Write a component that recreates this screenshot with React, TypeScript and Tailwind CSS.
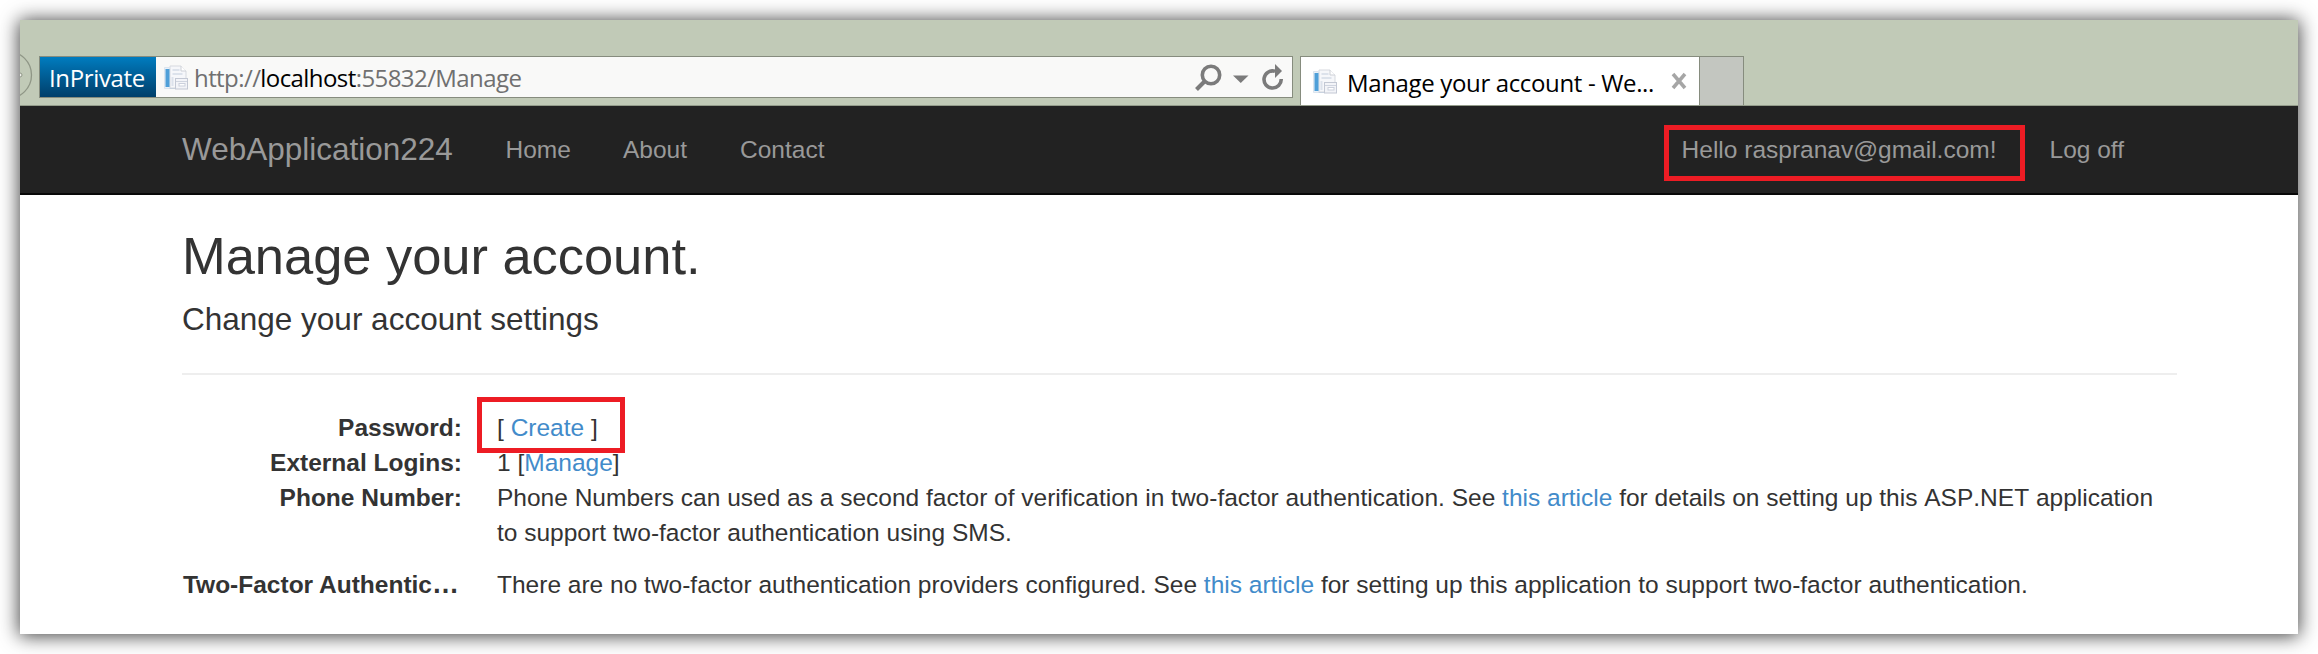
import React from "react";

const PageIcon = ({ className }: { className?: string }) => (
  <svg width="25" height="26" viewBox="0 0 25 26" className={className}>
    <path d="M6 1h11l5 5v17H6z" fill="#f6f7fa" stroke="#d6d9df" />
    <path d="M17 1v5h5" fill="#fff" stroke="#cdd0d6" />
    <path d="M.5 2.500h5v21H.5z" fill="#eaf1f8" stroke="#dbe4ee" />
    <rect x="1.500" y="4" width="4" height="18" fill="#4f9fd8" />
    <path d="M5.500 23.500h6" stroke="#c9d2df" />
    <path d="M8.500 5h7M8.500 9h10M8.500 12v9" stroke="#dce2eb" strokeWidth="2" />
    <rect x="11.500" y="13.500" width="12" height="10.500" fill="#f3f4f8" stroke="#c3c8d4" />
    <path d="M12 16.500h11" stroke="#d0d5e0" />
    <rect x="15" y="18.500" width="6" height="2.500" fill="#fff" stroke="#cbd0dc" />
  </svg>
);

const Row = ({ label, tall, children }: { label: React.ReactNode; tall?: boolean; children: React.ReactNode }) => (
  <div className={tall ? "mt-[17px] flex" : "flex"}>
    <dt className="w-[280px] shrink-0 text-right font-bold whitespace-nowrap">{label}</dt>
    <dd className="relative ml-[35px] min-w-0 flex-1 pr-4">{children}</dd>
  </div>
);

const Link = ({ children }: { children: React.ReactNode }) => (
  <a className="text-[#428bca]">{children}</a>
);

export default function App() {
  return (
    <div className="h-[654px] w-[2318px] overflow-hidden bg-white p-5">
      <div className="h-[614px] w-[2278px] bg-white shadow-[0_1px_18px_1px_rgba(0,0,0,0.75)]">
        <div className="flex h-[86px] overflow-hidden border-b border-[#949c8b] bg-[#c1cab7] pt-9 font-['Open_Sans',sans-serif]">
          <svg width="19" height="49" viewBox="0 0 19 49" className="-mt-1.5 shrink-0">
            <circle cx="-12" cy="25" r="23.500" fill="none" stroke="#8f9686" strokeWidth="1.300" />
            <circle cx="0" cy="25" r="2" fill="#eef0ea" stroke="#8f9686" />
          </svg>
          <div className="flex h-[42px] w-[1254px] shrink-0 border border-[#868c7e] bg-[#f9f9f8]">
            <div className="w-[116px] bg-linear-to-b from-[#007cbf] to-[#003f6b] pl-[9px] text-[24px] leading-[42px] font-medium tracking-[-0.35px] whitespace-nowrap text-white">
              InPrivate
            </div>
            <PageIcon className="mt-2 ml-2" />
            <div className="ml-[5px] flex-1 text-[24px] leading-[42px] tracking-[-0.58px] whitespace-nowrap text-[#707070]">
              http://<span className="text-black">localhost</span>:55832/Manage
            </div>
            <svg width="97" height="40" viewBox="1195 57 97 40">
              <circle cx="1211" cy="75" r="8.700" fill="none" stroke="#7b7b7b" strokeWidth="3.600" />
              <path d="M1204.500 81.500l-8 8" stroke="#7b7b7b" strokeWidth="4" />
              <path d="M1233 75.500h15.500l-7.750 7.500z" fill="#7b7b7b" />
              <path d="M1275 71.200A8.600 8.600 0 1 0 1281.200 79" fill="none" stroke="#7b7b7b" strokeWidth="3.600" />
              <path d="M1275 64l7 7-7 7z" fill="#7b7b7b" />
            </svg>
          </div>
          <div className="ml-[7px] flex h-[49px] w-[400px] shrink-0 border border-b-0 border-[#868c7e] bg-white">
            <PageIcon className="mt-3 ml-3" />
            <div className="ml-[9px] flex-1 text-[24px] leading-[51px] tracking-[-0.35px] whitespace-nowrap text-black">
              Manage your account - We...
            </div>
            <svg width="16" height="18" viewBox="0 0 16 18" className="mt-[15px] mr-3">
              <path d="M2 2l12 14M14 2L2 16" stroke="#a6a6a6" strokeWidth="3.500" />
            </svg>
          </div>
          <div className="h-[49px] w-11 shrink-0 border border-b-0 border-l-0 border-[#868c7e] bg-[#c3c6c0]" />
        </div>
        <nav className="flex h-[89px] border-b-2 border-[#080808] bg-[#222] pl-[162px] font-['Liberation_Sans',Arial,sans-serif] text-[24.5px] leading-[87px] whitespace-nowrap text-[#999]">
          <span className="w-[323.500px] text-[31.5px]">WebApplication224</span>
          <span className="w-[117.500px]">Home</span>
          <span className="w-[117px]">About</span>
          <span>Contact</span>
          <span className="relative mr-[53px] ml-auto">
            Hello raspranav@gmail.com!
            <span className="absolute top-[19px] left-[-18px] h-14 w-[361px] border-[5px] border-[#ed1c24]" />
          </span>
          <span className="mr-[174px]">Log off</span>
        </nav>
        <main className="ml-[162px] w-[1995px] pt-8 font-['Liberation_Sans',Arial,sans-serif] text-[24.5px] leading-[35px] text-[#333]">
          <h2 className="text-[52.5px] leading-[58px] tracking-[-0.05px]">Manage your account.</h2>
          <h4 className="mt-[17px] text-[31.5px] leading-[35px]">Change your account settings</h4>
          <hr className="mt-9 mb-[35px] border-t-2 border-[#eee]" />
          <dl>
            <Row label="Password:">
              [ <Link>Create</Link> ]
              <span className="absolute -top-[13px] -left-5 z-10 h-14 w-[148px] border-[5px] border-[#ed1c24]" />
            </Row>
            <Row label="External Logins:">
              1 [<Link>Manage</Link>]
            </Row>
            <Row label="Phone Number:">
              Phone Numbers can used as a second factor of verification in two-factor authentication. See{" "}
              <Link>this article</Link> for details on setting up this{" "}
              <span className="[font-kerning:none]">ASP.NET</span> application to support two-factor authentication
              using SMS.
            </Row>
            <Row
              tall
              label={
                <>
                  Two-Factor Authentic<span className="mr-[3px] text-[27px] leading-none">…</span>
                </>
              }
            >
              There are no two-factor authentication providers configured. See <Link>this article</Link> for setting up
              this application to support two-factor authentication.
            </Row>
          </dl>
        </main>
      </div>
    </div>
  );
}
